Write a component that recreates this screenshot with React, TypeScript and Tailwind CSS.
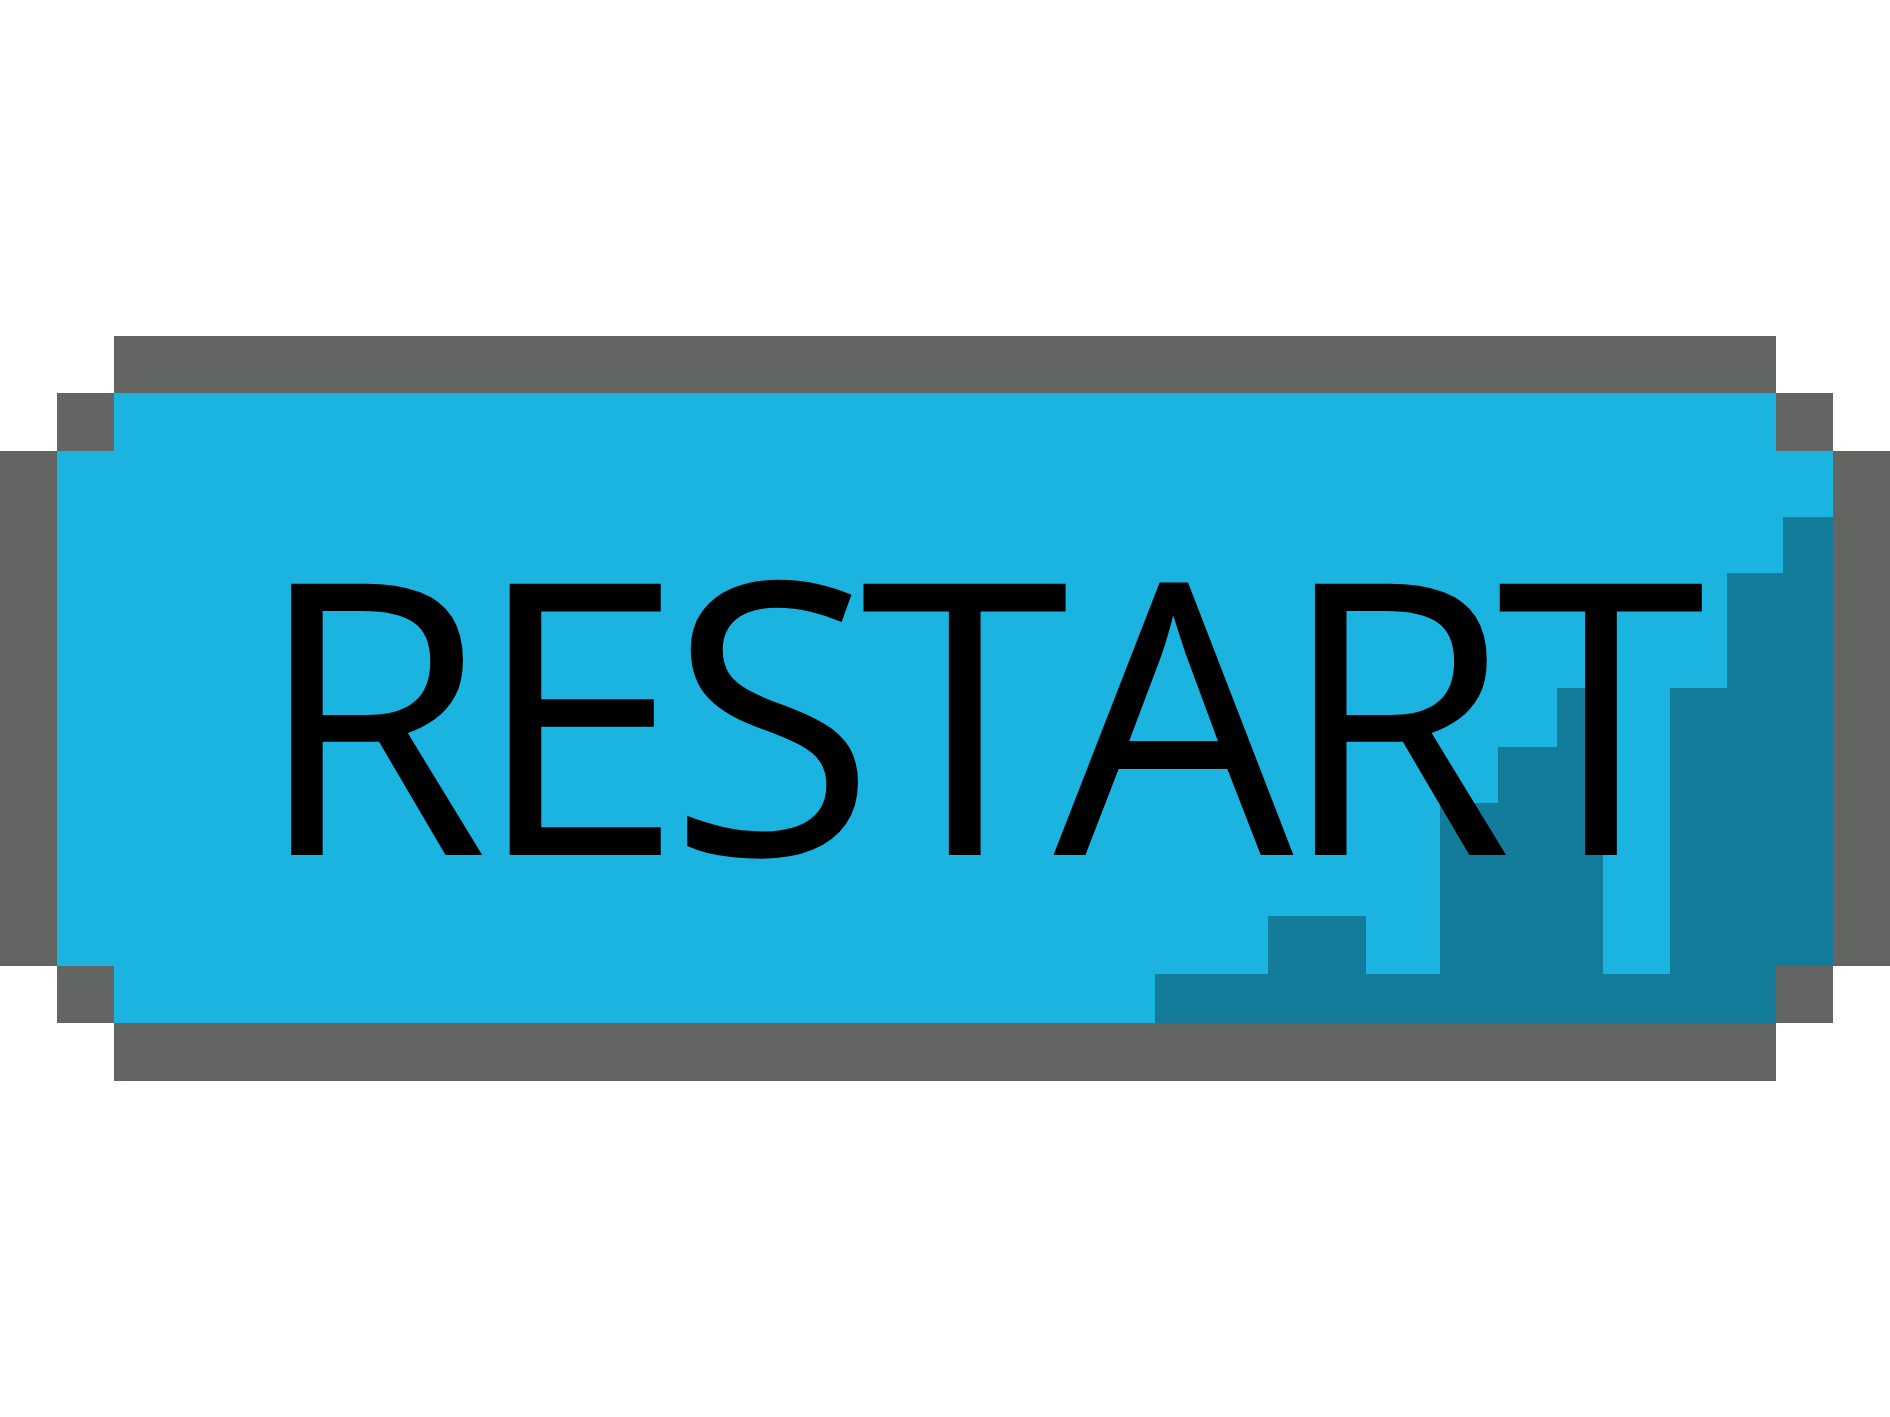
const gray = "bg-[#636562]";

function Cell({ className }: { className: string }) {
    return <div className={className} />;
}

export default function App() {
    return (
        <div className="w-[1890px] h-[1417px] bg-white pt-[336px] overflow-hidden">
            <div className="relative w-[1890px]">
                {/* top edge */}
                <div className={`mx-[114px] h-[57px] ${gray}`} />
                <div className="flex h-[58px] mx-[57px]">
                    <Cell className={`w-[57px] ${gray}`} />
                    <div className="flex-1 bg-[#1bb3e0]" />
                    <Cell className={`w-[57px] ${gray}`} />
                </div>

                {/* middle band with the label */}
                <div className="flex h-[515px]">
                    <Cell className={`w-[57px] ${gray}`} />
                    <div className="flex-1 bg-[#1bb3e0] pl-[197px] pt-[67px]">
                        <span
                            className="relative z-10 block text-[380px] font-medium leading-none text-black tracking-[-0.042em]"
                            style={{ fontFamily: '"Open Sans", "Noto Sans", sans-serif' }}
                        >
                            RESTART
                        </span>
                    </div>
                    <Cell className={`w-[57px] ${gray}`} />
                </div>

                {/* bottom edge */}
                <div className="flex h-[57px] mx-[57px]">
                    <Cell className={`w-[57px] ${gray}`} />
                    <div className="flex-1 bg-[#1bb3e0]" />
                    <Cell className={`w-[57px] ${gray}`} />
                </div>
                <div className={`mx-[114px] h-[58px] ${gray}`} />

                {/* stepped shadow in the lower right */}
                <svg
                    className="absolute left-0 top-0 pointer-events-none"
                    width="1890"
                    height="745"
                    viewBox="0 0 1890 745"
                >
                    <polygon
                        fill="#137c9a"
                        points="1155,687 1155,638 1268,638 1268,580 1366,580 1366,638 1440,638 1440,467 1498,467 1498,411 1557,411 1557,352 1603,352 1603,638 1670,638 1670,352 1727,352 1727,237 1783,237 1783,181 1833,181 1833,630 1776,630 1776,687"
                    />
                </svg>
            </div>
        </div>
    );
}
